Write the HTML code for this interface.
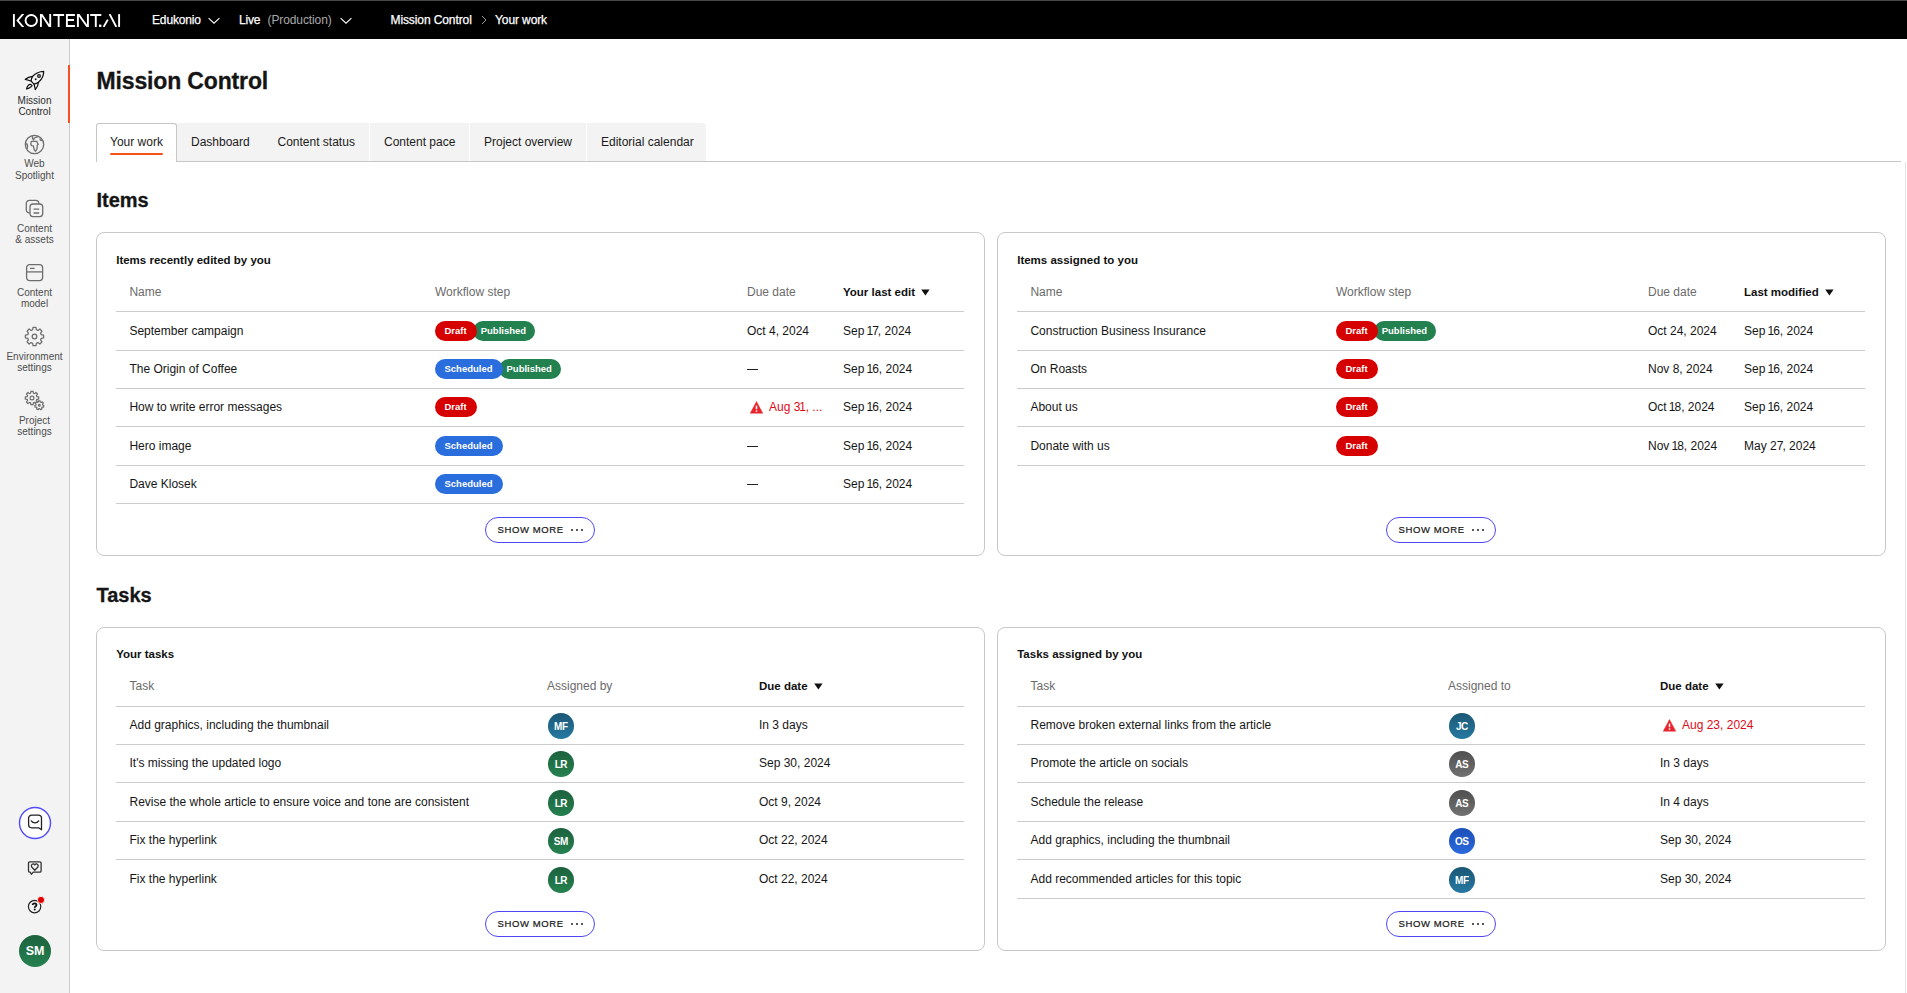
<!DOCTYPE html><html><head><meta charset="utf-8"><title>Mission Control</title><style>
*{box-sizing:border-box;margin:0;padding:0}
html,body{width:1907px;height:993px;overflow:hidden;background:#fff}
body{font-family:"Liberation Sans",sans-serif;color:#161616;position:relative}
.a{position:absolute;white-space:nowrap}
.t{position:absolute;white-space:nowrap;line-height:20px;height:20px}
.tb{-webkit-text-stroke:0.25px currentColor}
.card{position:absolute;border:1px solid #c8c8c8;border-radius:8px;width:889px;height:324px;background:#fff}
.ln{position:absolute;height:1px;background:#cbcbcb}
.badge{position:absolute;height:20px;line-height:20px;border-radius:10px;color:#fff;font-weight:700;font-size:9.5px;padding:0 10px 0 9.5px}
.btn{position:absolute;width:110px;height:26px;border:1px solid #4e48f4;border-radius:13px;background:#fff}
.av{position:absolute;width:25.6px;height:25.6px;border-radius:50%;color:#fff;font-weight:700;font-size:10px;line-height:27.4px;text-align:center;letter-spacing:-0.5px}
.g{background:linear-gradient(#1c623e,#25814f)}
.tl{background:linear-gradient(#1b5775,#2679a2)}
.gr{background:linear-gradient(#4f4f4f,#727272)}
.bl{background:linear-gradient(#1c4fb8,#2a69db)}
</style></head><body>
<div class="a" style="left:0;top:0;width:1907px;height:39px;background:#000;border-top:1px solid #474747"></div>
<svg class="a" style="left:0;top:0" width="130" height="39" viewBox="0 0 130 39">
<defs><clipPath id="lc"><rect x="0" y="14.1" width="130" height="12.8"/></clipPath></defs><g fill="none" stroke="#fff" stroke-width="1.9" stroke-linecap="butt" stroke-linejoin="miter" stroke-miterlimit="10" clip-path="url(#lc)">
<path d="M13.9 14.1V26.9"/>
<path d="M23.4 13.6L17.6 20.5L23.4 27.4"/>
<ellipse cx="31.25" cy="20.5" rx="5.7" ry="5.5"/>
<path d="M40.9 27.5V14.1M40.9 13.5L50.2 27.5M50.2 27.5V13.5"/>
<path d="M53.2 15.05H64.1M58.65 15.05V26.9"/>
<path d="M74.9 15.05H66.9V25.95H74.9M66.9 20H74"/>
<path d="M77.9 27.5V14.1M77.9 13.5L87.9 27.5M87.9 27.5V13.5"/>
<path d="M90.2 15.05H101.3M95.8 15.05V26.9"/>
<path d="M103.6 26.9L107.8 19.6"/>
<path d="M109.6 14.1L116.3 26.9"/>
<path d="M119.1 14.1V26.9"/>
</g>
<rect x="99" y="24.6" width="2.4" height="2.3" fill="#fff"/>
</svg>
<div class="t tb" style="left:152px;top:10px;font-size:12px;color:#fff;letter-spacing:-0.15px">Edukonio</div>
<svg class="a" style="left:207.5px;top:17px" width="12" height="8" viewBox="0 0 12 8"><path d="M0.6 1.2L6 6.2L11.4 1.2" fill="none" stroke="#fff" stroke-width="1.1"/></svg>
<div class="t tb" style="left:239px;top:10px;font-size:12px;color:#fff;letter-spacing:-0.2px">Live</div>
<div class="t" style="left:267.5px;top:10px;font-size:12px;color:#a9a9a9;letter-spacing:-0.1px">(Production)</div>
<svg class="a" style="left:339.5px;top:17px" width="12" height="8" viewBox="0 0 12 8"><path d="M0.6 1.2L6 6.2L11.4 1.2" fill="none" stroke="#fff" stroke-width="1.1"/></svg>
<div class="t tb" style="left:390.5px;top:10px;font-size:12px;color:#fff;letter-spacing:-0.1px">Mission Control</div>
<svg class="a" style="left:480px;top:15px" width="8" height="10" viewBox="0 0 8 10"><path d="M2 1L6 5L2 9" fill="none" stroke="#9a9a9a" stroke-width="1"/></svg>
<div class="t tb" style="left:495px;top:10px;font-size:12px;color:#fff;letter-spacing:-0.1px">Your work</div>
<div class="a" style="left:0;top:39px;width:70px;height:954px;background:#f3f3f3;border-right:1px solid #c9c9c9"></div>
<div class="a" style="left:68px;top:65px;width:2px;height:58px;background:#f4511e"></div>
<svg class="a" style="left:22px;top:68px" width="25" height="25" viewBox="0 0 25 25"><g fill="none" stroke="#111" stroke-width="1.25" stroke-linejoin="round" stroke-linecap="round">
<path d="M21.65 3.3C17.3 3.4 13.4 5.4 10.6 8.4C9.6 9.9 9.2 11.5 9.1 13.1L12.1 16.1C13.6 15.9 15.1 15.3 16.5 14.3C19.8 11.5 21.9 8 21.65 3.3Z"/>
<path d="M10.6 8.4C7.7 8.8 5.2 9.8 3.3 11.3L9.1 13"/>
<path d="M16.5 14.3C16.2 17.2 15.2 19.6 13.3 21.6L12.1 16.1"/>
<path d="M10 17.5C9.3 16.1 7.6 16 6.3 17.3C5.2 18.5 4.7 20 4.5 20.8C5.3 20.7 6.9 20.3 8.1 19.4C9.4 18.5 10.4 18.3 10 17.5Z"/>
<circle cx="17" cy="7.9" r="1.35"/>
</g><circle cx="13.7" cy="11.3" r="0.95" fill="#111"/></svg>
<div class="a" style="left:0;width:69px;text-align:center;top:94.8px;height:12px;line-height:12px;font-size:10px;color:#2b2b2b;letter-spacing:0px">Mission</div><div class="a" style="left:0;width:69px;text-align:center;top:106.1px;height:12px;line-height:12px;font-size:10px;color:#2b2b2b;letter-spacing:0px">Control</div>
<svg class="a" style="left:24px;top:134px" width="21" height="21" viewBox="0 0 21 21"><g fill="none" stroke="#6e6e6e" stroke-width="1.3" stroke-linejoin="round">
<circle cx="10.5" cy="10.5" r="9.2"/>
<path d="M8.3 1.5L8.6 4.6L9.6 5.8L10.4 4L14.5 2.3"/>
<path d="M16 4.3L16.2 6L18 6.5"/>
<path d="M1.5 9.6L3.2 10.2L3.6 12.3L3 15"/>
<path d="M7.3 7.3H12.8L13.5 9.4L14.4 10.3L13.3 11L13 14.7L11.6 17.2L10.2 15.7L9.4 11.9L7.6 11.6L6.7 10.2Z"/>
</g></svg>
<div class="a" style="left:0;width:69px;text-align:center;top:158.4px;height:12px;line-height:12px;font-size:10px;color:#4d4d4d;letter-spacing:0px">Web</div><div class="a" style="left:0;width:69px;text-align:center;top:169.7px;height:12px;line-height:12px;font-size:10px;color:#4d4d4d;letter-spacing:0px">Spotlight</div>
<svg class="a" style="left:24px;top:198px" width="21" height="21" viewBox="0 0 21 21"><g fill="none" stroke="#6e6e6e" stroke-width="1.3" stroke-linejoin="round">
<path d="M5.9 14.9H5.5C3.6 14.9 2.3 13.6 2.3 11.7V5.6C2.3 3.7 3.6 2.4 5.5 2.4H11.6C13.5 2.4 14.9 3.6 14.9 5.9"/>
<rect x="6" y="6" width="12.7" height="12.6" rx="3"/>
<path d="M9.6 11.1H15.2M9.6 15H15.2"/>
</g></svg>
<div class="a" style="left:0;width:69px;text-align:center;top:222.9px;height:12px;line-height:12px;font-size:10px;color:#4d4d4d;letter-spacing:0px">Content</div><div class="a" style="left:0;width:69px;text-align:center;top:234.2px;height:12px;line-height:12px;font-size:10px;color:#4d4d4d;letter-spacing:0px">&amp; assets</div>
<svg class="a" style="left:24px;top:262px" width="21" height="21" viewBox="0 0 21 21"><g fill="none" stroke="#6e6e6e" stroke-width="1.3" stroke-linejoin="round">
<rect x="2.6" y="2.6" width="16" height="16" rx="3"/>
<path d="M2.6 9.9H18.6"/>
<path d="M6 6.4H10.6"/>
</g></svg>
<div class="a" style="left:0;width:69px;text-align:center;top:286.9px;height:12px;line-height:12px;font-size:10px;color:#4d4d4d;letter-spacing:0px">Content</div><div class="a" style="left:0;width:69px;text-align:center;top:298.2px;height:12px;line-height:12px;font-size:10px;color:#4d4d4d;letter-spacing:0px">model</div>
<svg class="a" style="left:24px;top:326px" width="21" height="21" viewBox="0 0 21 21"><g fill="none" stroke="#6e6e6e" stroke-width="1.3" stroke-linejoin="round">
<path d="M8.63 3.75 L9.02 1.42 L11.98 1.42 L12.37 3.75 L13.95 4.41 L15.87 3.03 L17.97 5.13 L16.59 7.05 L17.25 8.63 L19.58 9.02 L19.58 11.98 L17.25 12.37 L16.59 13.95 L17.97 15.87 L15.87 17.97 L13.95 16.59 L12.37 17.25 L11.98 19.58 L9.02 19.58 L8.63 17.25 L7.05 16.59 L5.13 17.97 L3.03 15.87 L4.41 13.95 L3.75 12.37 L1.42 11.98 L1.42 9.02 L3.75 8.63 L4.41 7.05 L3.03 5.13 L5.13 3.03 L7.05 4.41Z"/>
<circle cx="10.5" cy="10.5" r="2.3"/>
</g></svg>
<div class="a" style="left:0;width:69px;text-align:center;top:350.7px;height:12px;line-height:12px;font-size:10px;color:#4d4d4d;letter-spacing:0px">Environment</div><div class="a" style="left:0;width:69px;text-align:center;top:362.0px;height:12px;line-height:12px;font-size:10px;color:#4d4d4d;letter-spacing:0px">settings</div>
<svg class="a" style="left:24px;top:390px" width="21" height="21" viewBox="0 0 21 21"><g fill="none" stroke="#6e6e6e" stroke-width="1.2" stroke-linejoin="round">
<path d="M6.67 3.18 L6.90 1.29 L9.10 1.29 L9.33 3.18 L10.46 3.65 L11.97 2.48 L13.52 4.03 L12.35 5.54 L12.82 6.67 L14.71 6.90 L14.71 9.10 L12.82 9.33 L12.35 10.46 L13.52 11.97 L11.97 13.52 L10.46 12.35 L9.33 12.82 L9.10 14.71 L6.90 14.71 L6.67 12.82 L5.54 12.35 L4.03 13.52 L2.48 11.97 L3.65 10.46 L3.18 9.33 L1.29 9.10 L1.29 6.90 L3.18 6.67 L3.65 5.54 L2.48 4.03 L4.03 2.48 L5.54 3.65Z"/>
<circle cx="8" cy="8" r="1.9"/>
<path d="M14.27 12.06 L14.45 10.78 L16.15 10.78 L16.33 12.06 L17.19 12.47 L18.31 11.82 L19.36 13.14 L18.48 14.09 L18.69 15.01 L19.90 15.48 L19.52 17.13 L18.23 17.03 L17.64 17.77 L18.02 19.01 L16.50 19.74 L15.78 18.67 L14.82 18.67 L14.10 19.74 L12.58 19.01 L12.96 17.77 L12.37 17.03 L11.08 17.13 L10.70 15.48 L11.91 15.01 L12.12 14.09 L11.24 13.14 L12.29 11.82 L13.41 12.47Z" fill="#f3f3f3"/>
<circle cx="15.3" cy="15.3" r="0.9"/>
</g></svg>
<div class="a" style="left:0;width:69px;text-align:center;top:414.7px;height:12px;line-height:12px;font-size:10px;color:#4d4d4d;letter-spacing:0px">Project</div><div class="a" style="left:0;width:69px;text-align:center;top:426.0px;height:12px;line-height:12px;font-size:10px;color:#4d4d4d;letter-spacing:0px">settings</div>
<svg class="a" style="left:17px;top:805px" width="36" height="36" viewBox="0 0 36 36"><circle cx="18" cy="18" r="15.5" fill="#fff" stroke="#4f4cf7" stroke-width="1.4"/>
<g transform="translate(10 9)" fill="none" stroke="#222" stroke-width="1.3" stroke-linejoin="round" stroke-linecap="round">
<path d="M14.5 15.8L11.6 13.8H4.8C2.9 13.8 1.6 12.5 1.6 10.6V4.3C1.6 2.4 2.9 1.2 4.8 1.2H11.3C13.2 1.2 14.5 2.4 14.5 4.3Z"/>
<path d="M4.3 6.9C6.1 9.6 9.8 9.6 11.7 6.9"/>
</g></svg>
<svg class="a" style="left:27px;top:860px" width="16" height="16" viewBox="0 0 16 16"><g fill="none" stroke="#333" stroke-width="1.3" stroke-linejoin="round">
<path d="M3.3 12.2L4.4 14.3L6.2 12.2H12.8C13.6 12.2 14.1 11.7 14.1 10.9V3.1C14.1 2.3 13.6 1.8 12.8 1.8H2.8C2 1.8 1.5 2.3 1.5 3.1V10.9C1.5 11.7 2 12.2 2.8 12.2Z"/>
<path d="M7.8 10.2L4.9 7.2C3.8 6 4.6 3.9 6.2 3.9C7 3.9 7.5 4.4 7.8 4.9C8.1 4.4 8.6 3.9 9.4 3.9C11 3.9 11.8 6 10.7 7.2Z"/>
</g></svg>
<svg class="a" style="left:26px;top:896px" width="20" height="20" viewBox="0 0 20 20">
<circle cx="8.6" cy="10.6" r="6.2" fill="none" stroke="#222" stroke-width="1.2"/>
<path d="M6.7 9.1C6.7 8 7.5 7.3 8.6 7.3C9.7 7.3 10.5 8 10.5 9C10.5 10.3 8.7 10.3 8.7 11.8" fill="none" stroke="#111" stroke-width="1.7"/>
<circle cx="8.7" cy="13.6" r="1" fill="#111"/>
<circle cx="15" cy="3.9" r="3.6" fill="#e00000" stroke="#f3f3f3" stroke-width="0.9"/>
</svg>
<div class="a g" style="left:19px;top:935px;width:32px;height:32px;border-radius:50%;color:#fff;font-weight:700;font-size:12.5px;line-height:32px;text-align:center">SM</div>
<div class="a" style="left:1905px;top:162px;width:1px;height:831px;background:#e3e3e3"></div>
<div class="a" style="left:96.5px;top:66.5px;height:29px;line-height:29px;font-size:23px;font-weight:700;letter-spacing:-0.15px;color:#151515;-webkit-text-stroke:0.3px #151515">Mission Control</div>
<div class="a" style="left:96px;top:161px;width:1805px;height:1px;background:#c6c6c6"></div>
<div class="a" style="left:177px;top:123px;width:529px;height:38px;background:#f3f3f3;border-top-right-radius:4px"></div>
<div class="a" style="left:96px;top:123px;width:81px;height:39px;background:#fff;border:1px solid #c6c6c6;border-bottom:none;border-top-left-radius:3px;border-top-right-radius:3px"></div>
<div class="a" style="left:369px;top:123px;width:1px;height:38px;background:#fff"></div>
<div class="a" style="left:469px;top:123px;width:1px;height:38px;background:#fff"></div>
<div class="a" style="left:586px;top:123px;width:1px;height:38px;background:#fff"></div>
<div class="t" style="left:110px;top:132px;font-size:12px;color:#1b1b1b">Your work</div>
<div class="t" style="left:191px;top:132px;font-size:12px;color:#1b1b1b">Dashboard</div>
<div class="t" style="left:277.5px;top:132px;font-size:12px;color:#1b1b1b">Content status</div>
<div class="t" style="left:384px;top:132px;font-size:12px;color:#1b1b1b">Content pace</div>
<div class="t" style="left:484px;top:132px;font-size:12px;color:#1b1b1b">Project overview</div>
<div class="t" style="left:601px;top:132px;font-size:12px;color:#1b1b1b">Editorial calendar</div>
<div class="a" style="left:110px;top:153px;width:53px;height:2px;background:#f4511e;border-radius:1px"></div>
<div class="a" style="left:96.5px;top:187px;height:26px;line-height:26px;font-size:20px;font-weight:700;color:#151515;-webkit-text-stroke:0.3px #151515">Items</div>
<div class="a" style="left:96.5px;top:582px;height:26px;line-height:26px;font-size:20px;font-weight:700;color:#151515;-webkit-text-stroke:0.3px #151515">Tasks</div>
<div class="card" style="left:96px;top:232px"><div class="t" style="left:19.19999999999999px;top:17px;font-size:11.5px;font-weight:700;color:#111">Items recently edited by you</div><div class="t" style="left:32.400000000000006px;top:49px;font-size:12px;color:#6b6b6b">Name</div><div class="t" style="left:338px;top:49px;font-size:12px;color:#6b6b6b">Workflow step</div><div class="t" style="left:650px;top:49px;font-size:12px;color:#6b6b6b">Due date</div><div class="t" style="left:746px;top:49px;font-size:11.5px;font-weight:700;color:#111">Your last edit<svg style="margin-left:6px;vertical-align:0px" width="9" height="7" viewBox="0 0 9 7"><path d="M0.2 0.5H8.6L4.4 6.5Z" fill="#111"/></svg></div><div class="ln" style="left:19px;top:78px;width:848px"></div><div class="ln" style="left:19px;top:117px;width:848px"></div><div class="ln" style="left:19px;top:155px;width:848px"></div><div class="ln" style="left:19px;top:193px;width:848px"></div><div class="ln" style="left:19px;top:232px;width:848px"></div><div class="ln" style="left:19px;top:270px;width:848px"></div><div class="t" style="left:32.400000000000006px;top:88.0px;font-size:12px">September campaign</div><div class="badge" style="left:338px;top:88.0px;background:#d60000;z-index:5;padding:0 10px 0 9.5px">Draft</div><div class="badge" style="left:375.7px;top:88.0px;background:#23804f;z-index:4;padding:0 9px 0 8px">Published</div><div class="t" style="left:650px;top:88.0px;font-size:12px">Oct 4, 2024</div><div class="t" style="left:746px;top:88.0px;font-size:12px">Sep <span style="margin-left:-1.3px;letter-spacing:-0.9px">1</span><span style="letter-spacing:-1px">7</span>, 2024</div><div class="t" style="left:32.400000000000006px;top:126.0px;font-size:12px">The Origin of Coffee</div><div class="badge" style="left:338px;top:126.0px;background:#2a6edd;z-index:5;padding:0 10px 0 9.5px">Scheduled</div><div class="badge" style="left:401.5px;top:126.0px;background:#23804f;z-index:4;padding:0 9px 0 8px">Published</div><div class="a" style="left:650px;top:135.5px;width:11px;height:1.2px;background:#222"></div><div class="t" style="left:746px;top:126.0px;font-size:12px">Sep <span style="margin-left:-1.3px;letter-spacing:-0.9px">1</span>6, 2024</div><div class="t" style="left:32.400000000000006px;top:164.0px;font-size:12px">How to write error messages</div><div class="badge" style="left:338px;top:164.0px;background:#d60000;z-index:5;padding:0 10px 0 9.5px">Draft</div><svg class="a" style="left:653px;top:168.0px" width="13" height="13" viewBox="0 0 13 13"><path d="M6.5 0.4L12.8 12.3H0.2Z" fill="#e8232b" stroke="#e8232b" stroke-width="0.4" stroke-linejoin="round"/><rect x="5.75" y="4.6" width="1.5" height="3.6" fill="#fff"/><rect x="5.75" y="9.3" width="1.5" height="1.5" fill="#fff"/></svg><div class="t" style="left:672px;top:164.0px;font-size:12px;color:#de0b17">Aug 3<span style="margin-left:-1px;letter-spacing:-0.4px">1</span>, ...</div><div class="t" style="left:746px;top:164.0px;font-size:12px">Sep <span style="margin-left:-1.3px;letter-spacing:-0.9px">1</span>6, 2024</div><div class="t" style="left:32.400000000000006px;top:203.0px;font-size:12px">Hero image</div><div class="badge" style="left:338px;top:203.0px;background:#2a6edd;z-index:5;padding:0 10px 0 9.5px">Scheduled</div><div class="a" style="left:650px;top:212.5px;width:11px;height:1.2px;background:#222"></div><div class="t" style="left:746px;top:203.0px;font-size:12px">Sep <span style="margin-left:-1.3px;letter-spacing:-0.9px">1</span>6, 2024</div><div class="t" style="left:32.400000000000006px;top:241.0px;font-size:12px">Dave Klosek</div><div class="badge" style="left:338px;top:241.0px;background:#2a6edd;z-index:5;padding:0 10px 0 9.5px">Scheduled</div><div class="a" style="left:650px;top:250.5px;width:11px;height:1.2px;background:#222"></div><div class="t" style="left:746px;top:241.0px;font-size:12px">Sep <span style="margin-left:-1.3px;letter-spacing:-0.9px">1</span>6, 2024</div><div class="btn" style="left:388px;top:284px"></div><div class="t" style="left:400.5px;top:286.6px;font-size:9.5px;letter-spacing:0.62px;color:#161616;-webkit-text-stroke:0.2px #161616">SHOW MORE</div><div class="a" style="left:473.79999999999995px;top:295.5px;width:2.5px;height:2.5px;background:#222;border-radius:50%"></div><div class="a" style="left:478.79999999999995px;top:295.5px;width:2.5px;height:2.5px;background:#222;border-radius:50%"></div><div class="a" style="left:483.79999999999995px;top:295.5px;width:2.5px;height:2.5px;background:#222;border-radius:50%"></div></div>
<div class="card" style="left:997px;top:232px"><div class="t" style="left:19.200000000000045px;top:17px;font-size:11.5px;font-weight:700;color:#111">Items assigned to you</div><div class="t" style="left:32.40000000000009px;top:49px;font-size:12px;color:#6b6b6b">Name</div><div class="t" style="left:338px;top:49px;font-size:12px;color:#6b6b6b">Workflow step</div><div class="t" style="left:650px;top:49px;font-size:12px;color:#6b6b6b">Due date</div><div class="t" style="left:746px;top:49px;font-size:11.5px;font-weight:700;color:#111">Last modified<svg style="margin-left:6px;vertical-align:0px" width="9" height="7" viewBox="0 0 9 7"><path d="M0.2 0.5H8.6L4.4 6.5Z" fill="#111"/></svg></div><div class="ln" style="left:19px;top:78px;width:848px"></div><div class="ln" style="left:19px;top:117px;width:848px"></div><div class="ln" style="left:19px;top:155px;width:848px"></div><div class="ln" style="left:19px;top:193px;width:848px"></div><div class="ln" style="left:19px;top:232px;width:848px"></div><div class="t" style="left:32.40000000000009px;top:88.0px;font-size:12px">Construction Business Insurance</div><div class="badge" style="left:338px;top:88.0px;background:#d60000;z-index:5;padding:0 10px 0 9.5px">Draft</div><div class="badge" style="left:375.7px;top:88.0px;background:#23804f;z-index:4;padding:0 9px 0 8px">Published</div><div class="t" style="left:650px;top:88.0px;font-size:12px">Oct 24, 2024</div><div class="t" style="left:746px;top:88.0px;font-size:12px">Sep <span style="margin-left:-1.3px;letter-spacing:-0.9px">1</span>6, 2024</div><div class="t" style="left:32.40000000000009px;top:126.0px;font-size:12px">On Roasts</div><div class="badge" style="left:338px;top:126.0px;background:#d60000;z-index:5;padding:0 10px 0 9.5px">Draft</div><div class="t" style="left:650px;top:126.0px;font-size:12px">Nov 8, 2024</div><div class="t" style="left:746px;top:126.0px;font-size:12px">Sep <span style="margin-left:-1.3px;letter-spacing:-0.9px">1</span>6, 2024</div><div class="t" style="left:32.40000000000009px;top:164.0px;font-size:12px">About us</div><div class="badge" style="left:338px;top:164.0px;background:#d60000;z-index:5;padding:0 10px 0 9.5px">Draft</div><div class="t" style="left:650px;top:164.0px;font-size:12px">Oct <span style="margin-left:-1.3px;letter-spacing:-0.9px">1</span>8, 2024</div><div class="t" style="left:746px;top:164.0px;font-size:12px">Sep <span style="margin-left:-1.3px;letter-spacing:-0.9px">1</span>6, 2024</div><div class="t" style="left:32.40000000000009px;top:203.0px;font-size:12px">Donate with us</div><div class="badge" style="left:338px;top:203.0px;background:#d60000;z-index:5;padding:0 10px 0 9.5px">Draft</div><div class="t" style="left:650px;top:203.0px;font-size:12px">Nov <span style="margin-left:-1.3px;letter-spacing:-0.9px">1</span>8, 2024</div><div class="t" style="left:746px;top:203.0px;font-size:12px">May 2<span style="letter-spacing:-1px">7</span>, 2024</div><div class="btn" style="left:388px;top:284px"></div><div class="t" style="left:400.5px;top:286.6px;font-size:9.5px;letter-spacing:0.62px;color:#161616;-webkit-text-stroke:0.2px #161616">SHOW MORE</div><div class="a" style="left:473.79999999999995px;top:295.5px;width:2.5px;height:2.5px;background:#222;border-radius:50%"></div><div class="a" style="left:478.79999999999995px;top:295.5px;width:2.5px;height:2.5px;background:#222;border-radius:50%"></div><div class="a" style="left:483.79999999999995px;top:295.5px;width:2.5px;height:2.5px;background:#222;border-radius:50%"></div></div>
<div class="card" style="left:96px;top:627px"><div class="t" style="left:19.19999999999999px;top:16px;font-size:11.5px;font-weight:700;color:#111">Your tasks</div><div class="t" style="left:32.5px;top:48px;font-size:12px;color:#6b6b6b">Task</div><div class="t" style="left:450px;top:48px;font-size:12px;color:#6b6b6b">Assigned by</div><div class="t" style="left:662px;top:48px;font-size:11.5px;font-weight:700;color:#111">Due date<svg style="margin-left:6px;vertical-align:0px" width="9" height="7" viewBox="0 0 9 7"><path d="M0.2 0.5H8.6L4.4 6.5Z" fill="#111"/></svg></div><div class="ln" style="left:19px;top:78px;width:848px"></div><div class="ln" style="left:19px;top:116px;width:848px"></div><div class="ln" style="left:19px;top:154px;width:848px"></div><div class="ln" style="left:19px;top:193px;width:848px"></div><div class="ln" style="left:19px;top:231px;width:848px"></div><div class="t" style="left:32.5px;top:87.0px;font-size:12px">Add graphics, including the thumbnail</div><div class="av tl" style="left:451px;top:85.0px">MF</div><div class="t" style="left:662px;top:87.0px;font-size:12px">In 3 days</div><div class="t" style="left:32.5px;top:125.0px;font-size:12px">It's missing the updated logo</div><div class="av g" style="left:451px;top:123.0px">LR</div><div class="t" style="left:662px;top:125.0px;font-size:12px">Sep 30, 2024</div><div class="t" style="left:32.5px;top:164.0px;font-size:12px">Revise the whole article to ensure voice and tone are consistent</div><div class="av g" style="left:451px;top:162.0px">LR</div><div class="t" style="left:662px;top:164.0px;font-size:12px">Oct 9, 2024</div><div class="t" style="left:32.5px;top:202.0px;font-size:12px">Fix the hyperlink</div><div class="av g" style="left:451px;top:200.0px">SM</div><div class="t" style="left:662px;top:202.0px;font-size:12px">Oct 22, 2024</div><div class="t" style="left:32.5px;top:241.0px;font-size:12px">Fix the hyperlink</div><div class="av g" style="left:451px;top:239.0px">LR</div><div class="t" style="left:662px;top:241.0px;font-size:12px">Oct 22, 2024</div><div class="btn" style="left:388px;top:283px"></div><div class="t" style="left:400.5px;top:285.6px;font-size:9.5px;letter-spacing:0.62px;color:#161616;-webkit-text-stroke:0.2px #161616">SHOW MORE</div><div class="a" style="left:473.79999999999995px;top:294.5px;width:2.5px;height:2.5px;background:#222;border-radius:50%"></div><div class="a" style="left:478.79999999999995px;top:294.5px;width:2.5px;height:2.5px;background:#222;border-radius:50%"></div><div class="a" style="left:483.79999999999995px;top:294.5px;width:2.5px;height:2.5px;background:#222;border-radius:50%"></div></div>
<div class="card" style="left:997px;top:627px"><div class="t" style="left:19.200000000000045px;top:16px;font-size:11.5px;font-weight:700;color:#111">Tasks assigned by you</div><div class="t" style="left:32.5px;top:48px;font-size:12px;color:#6b6b6b">Task</div><div class="t" style="left:450px;top:48px;font-size:12px;color:#6b6b6b">Assigned to</div><div class="t" style="left:662px;top:48px;font-size:11.5px;font-weight:700;color:#111">Due date<svg style="margin-left:6px;vertical-align:0px" width="9" height="7" viewBox="0 0 9 7"><path d="M0.2 0.5H8.6L4.4 6.5Z" fill="#111"/></svg></div><div class="ln" style="left:19px;top:78px;width:848px"></div><div class="ln" style="left:19px;top:116px;width:848px"></div><div class="ln" style="left:19px;top:154px;width:848px"></div><div class="ln" style="left:19px;top:193px;width:848px"></div><div class="ln" style="left:19px;top:231px;width:848px"></div><div class="ln" style="left:19px;top:270px;width:848px"></div><div class="t" style="left:32.5px;top:87.0px;font-size:12px">Remove broken external links from the article</div><div class="av tl" style="left:451px;top:85.0px">JC</div><svg class="a" style="left:665px;top:91.0px" width="13" height="13" viewBox="0 0 13 13"><path d="M6.5 0.4L12.8 12.3H0.2Z" fill="#e8232b" stroke="#e8232b" stroke-width="0.4" stroke-linejoin="round"/><rect x="5.75" y="4.6" width="1.5" height="3.6" fill="#fff"/><rect x="5.75" y="9.3" width="1.5" height="1.5" fill="#fff"/></svg><div class="t" style="left:684px;top:87.0px;font-size:12px;color:#de0b17">Aug 23, 2024</div><div class="t" style="left:32.5px;top:125.0px;font-size:12px">Promote the article on socials</div><div class="av gr" style="left:451px;top:123.0px">AS</div><div class="t" style="left:662px;top:125.0px;font-size:12px">In 3 days</div><div class="t" style="left:32.5px;top:164.0px;font-size:12px">Schedule the release</div><div class="av gr" style="left:451px;top:162.0px">AS</div><div class="t" style="left:662px;top:164.0px;font-size:12px">In 4 days</div><div class="t" style="left:32.5px;top:202.0px;font-size:12px">Add graphics, including the thumbnail</div><div class="av bl" style="left:451px;top:200.0px">OS</div><div class="t" style="left:662px;top:202.0px;font-size:12px">Sep 30, 2024</div><div class="t" style="left:32.5px;top:241.0px;font-size:12px">Add recommended articles for this topic</div><div class="av tl" style="left:451px;top:239.0px">MF</div><div class="t" style="left:662px;top:241.0px;font-size:12px">Sep 30, 2024</div><div class="btn" style="left:388px;top:283px"></div><div class="t" style="left:400.5px;top:285.6px;font-size:9.5px;letter-spacing:0.62px;color:#161616;-webkit-text-stroke:0.2px #161616">SHOW MORE</div><div class="a" style="left:473.79999999999995px;top:294.5px;width:2.5px;height:2.5px;background:#222;border-radius:50%"></div><div class="a" style="left:478.79999999999995px;top:294.5px;width:2.5px;height:2.5px;background:#222;border-radius:50%"></div><div class="a" style="left:483.79999999999995px;top:294.5px;width:2.5px;height:2.5px;background:#222;border-radius:50%"></div></div>
</body></html>
